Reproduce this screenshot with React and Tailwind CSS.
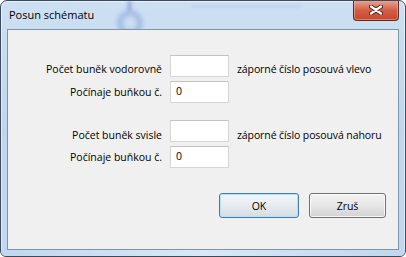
import React from "react";

function Field({ value }) {
  return (
    <div className="ml-2 w-[59px] h-[22px] shrink-0 border border-[#d6d6d6] border-t-[#c3c3c3] bg-white pl-[5px] pt-[1px] leading-[16px] text-black">
      {value}
    </div>
  );
}

function Row({ label, value, hint, pad }) {
  return (
    <div className="flex items-start h-[22px]">
      <div className={`w-[154px] shrink-0 text-right leading-[16px] ${pad}`}>{label}</div>
      <Field value={value} />
      {hint && <div className={`ml-2 whitespace-nowrap leading-[16px] tracking-[-0.1px] ${pad}`}>{hint}</div>}
    </div>
  );
}

function CloseGlyph() {
  return (
    <svg width="14" height="10" viewBox="0 0 14 10">
      <path d="M2 1.5 L12 8.5 M12 1.5 L2 8.5" stroke="#4a2017" strokeWidth="4.2" strokeLinecap="round" />
      <path d="M2 1.5 L12 8.5 M12 1.5 L2 8.5" stroke="#ffffff" strokeWidth="2.4" strokeLinecap="round" />
    </svg>
  );
}

export default function App() {
  return (
    <div className="w-[406px] h-[257px] bg-white font-['Open_Sans','Liberation_Sans',sans-serif] text-[10.5px] text-black">
      <div className="relative flex flex-col w-[406px] h-[257px] rounded-t-[7px] rounded-b-[6px] border border-[#3b4b5d] bg-gradient-to-b from-[#cde0f3] via-[#c0d6ed] to-[#c2d8ef] shadow-[inset_0_0_0_1px_rgba(255,255,255,0.55)] overflow-hidden">
        {/* blurred background seen through the glass */}
        <div className="absolute left-[126px] top-0 w-[5px] h-[10px] bg-[#8ea8d6]/70 blur-[1.5px]" />
        <div className="absolute left-[116px] top-[9px] w-[26px] h-[26px] rounded-full border-[6px] border-[#8fa9d8]/60 blur-[2px]" />
        <div className="absolute left-[190px] top-[4px] w-[110px] h-[2px] bg-[#aac2e4]/60 blur-[1.5px]" />

        {/* title bar */}
        <div className="relative flex h-[28px] items-start justify-between">
          <span className="ml-[8px] mt-[6px] text-[11px] leading-[16px]">Posun schématu</span>
          <button className="mr-[6px] -mt-[1px] w-[46px] h-[21px] flex items-center justify-center rounded-b-[4px] border border-t-0 border-[#5b2a22] bg-gradient-to-b from-[#e9a99a] via-[#d25f46] to-[#c7452b] shadow-[inset_0_0_0_1px_rgba(255,200,180,0.45)]">
            <CloseGlyph />
          </button>
        </div>

        {/* client area */}
        <div className="relative ml-[6px] w-[392px] h-[221px] border border-[#7f93a9] bg-[#f0f0f0] pt-[25px]">
          <div className="flex flex-col gap-[4px]">
            <Row label="Počet buněk vodorovně" value="" hint="záporné číslo posouvá vlevo" pad="pt-[6px]" />
            <Row label="Počínaje buňkou č." value="0" pad="pt-[3px]" />
          </div>
          <div className="flex flex-col gap-[4px] mt-[17px]">
            <Row label="Počet buněk svisle" value="" hint="záporné číslo posouvá nahoru" pad="pt-[7px]" />
            <Row label="Počínaje buňkou č." value="0" pad="pt-[3px]" />
          </div>
          <div className="flex justify-end gap-[10px] mt-[25px] mr-[12px]">
            <button className="w-[80px] h-[25px] rounded-[3px] border border-[#3c7fb1] bg-gradient-to-b from-[#f4f7f9] via-[#e6ebef] to-[#d4dde4] shadow-[inset_0_0_0_1px_#b9e1f6] leading-[16px]">
              OK
            </button>
            <button className="w-[77px] h-[25px] rounded-[3px] border border-[#707070] bg-gradient-to-b from-[#f3f3f3] via-[#e6e6e6] to-[#d3d3d3] shadow-[inset_0_0_0_1px_rgba(255,255,255,0.8)] leading-[16px]">
              Zruš
            </button>
          </div>
        </div>

        {/* bottom frame */}
        <div className="flex-1 bg-gradient-to-r from-[#c0d7ef] via-[#d8e8f7] to-[#c0d7ef]" />
      </div>
    </div>
  );
}
